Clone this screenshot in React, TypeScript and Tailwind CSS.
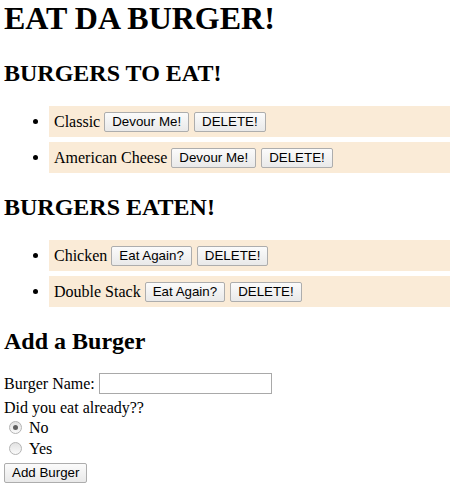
import React from 'react';

const toEat = ['Classic', 'American Cheese'];
const eaten = ['Chicken', 'Double Stack'];

const btnClass =
  "h-[20px] px-[7px] border border-[#adadad] rounded-[2px] bg-gradient-to-b from-[#fbfbfb] to-[#e9e9e9] font-['Liberation_Sans',Arial,sans-serif] text-[13.33px] leading-[16px] text-black";

const Btn = ({ children }: { children: React.ReactNode }) => (
  <button type="button" className={btnClass}>
    {children}
  </button>
);

const BurgerRow = ({ name, action }: { name: string; action: string }) => (
  <li className="flex items-stretch">
    <div className="w-[45px] flex items-center">
      <span className="ml-[29px] w-[5px] h-[5px] rounded-full bg-black"></span>
    </div>
    <div className="flex-1 h-[31px] bg-[#faebd7] pl-[5px] flex items-center gap-[5px]">
      <span className="mr-[-1px]">{name}</span>
      <Btn>{action}</Btn>
      <Btn>DELETE!</Btn>
    </div>
  </li>
);

const Radio = ({ checked, label }: { checked?: boolean; label: string }) => (
  <div className="h-[21px] flex items-center">
    <span className="ml-[5px] w-[13px] h-[13px] rounded-full border border-[#b4b4b4] bg-gradient-to-b from-[#e2e2e2] to-[#fafafa] flex items-center justify-center">
      {checked && <span className="w-[5px] h-[5px] rounded-full bg-[#606060]"></span>}
    </span>
    <span className="ml-[7px]">{label}</span>
  </div>
);

export default function App() {
  return (
    <div className="min-h-screen bg-white text-black pl-1 font-['Liberation_Serif','Times_New_Roman',serif] text-[16px] leading-[18px]">
      <h1 className="text-[32px] font-bold leading-[37px]">EAT DA BURGER!</h1>

      <h2 className="mt-[22px] text-[24px] font-bold leading-[28px]">BURGERS TO EAT!</h2>
      <ul className="mt-[19px] flex flex-col gap-[5px]">
        {toEat.map((b) => (
          <BurgerRow key={b} name={b} action="Devour Me!" />
        ))}
      </ul>

      <h2 className="mt-[20px] text-[24px] font-bold leading-[28px]">BURGERS EATEN!</h2>
      <ul className="mt-[19px] flex flex-col gap-[5px]">
        {eaten.map((b) => (
          <BurgerRow key={b} name={b} action="Eat Again?" />
        ))}
      </ul>

      <h2 className="mt-[20px] text-[24px] font-bold leading-[28px]">Add a Burger</h2>
      <form className="mt-[18px]">
        <div className="h-[21px] flex items-center gap-[4px]">
          <span>Burger Name:</span>
          <input type="text" className="w-[173px] h-[21px] border border-[#a9a9a9] bg-white outline-none" />
        </div>
        <div className="mt-[4px] h-[19px] flex items-center">Did you eat already??</div>
        <Radio checked label="No" />
        <Radio label="Yes" />
        <button type="button" className={"mt-[4px] " + btnClass}>
          Add Burger
        </button>
      </form>
    </div>
  );
}
